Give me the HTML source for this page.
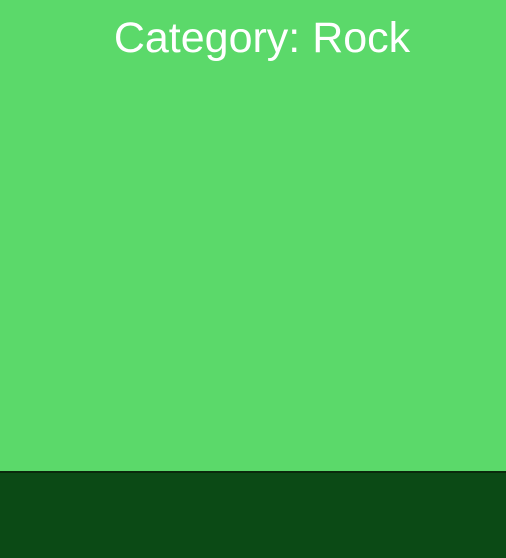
<!DOCTYPE html>
<html><head><style>
html,body{margin:0;padding:0;}
body{width:506px;height:558px;position:relative;overflow:hidden;background:#5bd96a;font-family:"Liberation Sans",sans-serif;}
.t{position:absolute;left:0;top:17px;width:524px;text-align:center;color:#fff;font-size:43px;line-height:43px;}
.line{position:absolute;left:0;top:471px;width:506px;height:2px;background:#0a2a0c;}
.foot{position:absolute;left:0;top:473px;width:506px;height:85px;background:#0b4a15;}
</style></head><body>
<div class="t">Category: Rock</div>
<div class="line"></div>
<div class="foot"></div>
</body></html>
